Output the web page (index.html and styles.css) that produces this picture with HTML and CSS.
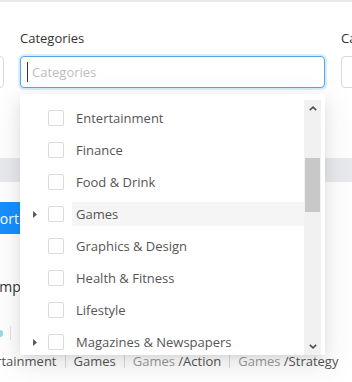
FILE: index.html
```html
<!DOCTYPE html>
<html lang="en">
<head>
<meta charset="utf-8">
<title>Categories</title>
<link rel="stylesheet" href="styles.css">
</head>
<body>
<div class="page">
  <div class="topbar"></div>
  <div class="filters">
    <div class="field field-side">
      <label class="label">Status</label>
      <div class="input"></div>
    </div>
    <div class="field field-main">
      <label class="label">Categories</label>
      <div class="input input-focus"><span class="caret"></span><span class="placeholder">Categories</span></div>
    </div>
    <div class="field field-side">
      <label class="label">Campaign</label>
      <div class="input"></div>
    </div>
  </div>
  <div class="band"></div>
  <div class="btn-row"><button class="btn">Export</button></div>
  <div class="name-row"><span class="name">Company</span></div>
  <div class="meta-row"><span class="dot"></span><span class="vline"></span></div>
  <div class="tags">
    <span class="tag">Entertainment</span>
    <span class="sep"></span>
    <span class="tag">Games</span>
    <span class="sep"></span>
    <span class="tag"><span class="parent">Games</span> /Action</span>
    <span class="sep"></span>
    <span class="tag"><span class="parent">Games</span> /Strategy</span>
  </div>

  <div class="dropdown">
    <ul class="tree">
      <li class="node"><span class="switcher"></span><span class="checkbox"></span><span class="title">Entertainment</span></li>
      <li class="node"><span class="switcher"></span><span class="checkbox"></span><span class="title">Finance</span></li>
      <li class="node"><span class="switcher"></span><span class="checkbox"></span><span class="title">Food &amp; Drink</span></li>
      <li class="node"><span class="switcher"><svg class="tri" width="4" height="7" viewBox="0 0 4 7"><path d="M0 0 L4 3.5 L0 7 Z"/></svg></span><span class="checkbox"></span><span class="title title-active">Games</span></li>
      <li class="node"><span class="switcher"></span><span class="checkbox"></span><span class="title">Graphics &amp; Design</span></li>
      <li class="node"><span class="switcher"></span><span class="checkbox"></span><span class="title">Health &amp; Fitness</span></li>
      <li class="node"><span class="switcher"></span><span class="checkbox"></span><span class="title">Lifestyle</span></li>
      <li class="node"><span class="switcher"><svg class="tri" width="4" height="7" viewBox="0 0 4 7"><path d="M0 0 L4 3.5 L0 7 Z"/></svg></span><span class="checkbox"></span><span class="title">Magazines &amp; Newspapers</span></li>
    </ul>
    <div class="scrollbar">
      <div class="sb-btn"><svg width="8" height="5" viewBox="0 0 8 5"><path d="M0.8 4.2 L4 1.2 L7.2 4.2" fill="none" stroke="#505050" stroke-width="1.6"/></svg></div>
      <div class="sb-track"><div class="sb-thumb"></div></div>
      <div class="sb-btn"><svg width="8" height="5" viewBox="0 0 8 5"><path d="M0.8 0.8 L4 3.8 L7.2 0.8" fill="none" stroke="#505050" stroke-width="1.6"/></svg></div>
    </div>
  </div>
</div>
</body>
</html>
```
FILE: styles.css
```css
* { box-sizing: border-box; }
html, body { margin: 0; padding: 0; background: #fff; }
body {
  font-family: "Open Sans", "Noto Sans", sans-serif;
  font-size: 13px;
  color: #555;
}
.page {
  position: relative;
  width: 352px;
  height: 382px;
  overflow: hidden;
}
.topbar { height: 2px; background: #e8e8e8; }

.filters {
  display: flex;
  gap: 16px;
  padding-top: 25px;
  margin-left: -196px;
}
.field { display: flex; flex-direction: column; flex-shrink: 0; }
.field-side { width: 200px; }
.field-main { width: 305px; }
.label {
  line-height: 22px;
  color: #333;
  margin-bottom: 7px;
}
.input {
  height: 32px;
  border: 1px solid #d9d9d9;
  border-radius: 4px;
  background: #fff;
  display: flex;
  align-items: center;
}
.input-focus {
  border-color: #5aa6e0;
  box-shadow: 0 0 0 2px rgba(24, 144, 255, 0.16);
  padding-left: 6px;
}
.caret { width: 1px; height: 20px; background: #333; margin-right: 4px; }
.placeholder { color: #bdbdbd; }

.band { margin-top: 70px; height: 24px; background: #e9eaed; }
.btn-row { margin-top: 20px; width: 34px; display: flex; justify-content: flex-end; }
.btn {
  flex-shrink: 0;
  height: 32px;
  padding: 0 15px;
  border: 0;
  border-radius: 4px;
  background: #1890ff;
  color: #fff;
  font: inherit;
  font-size: 14px;
}
.name-row { margin-top: 42px; line-height: 22px; margin-left: -18px; }
.name { color: #333; font-size: 14px; }
.meta-row { margin-top: 28px; height: 14px; display: flex; align-items: center; }
.dot { width: 3px; height: 7px; background: #4fc3d0; border-radius: 0 3px 3px 0; margin-right: 7px; opacity: .6; }
.vline { width: 1px; height: 14px; background: #e3e3e3; }

.tags {
  margin-top: 10px;
  margin-left: -31px;
  display: flex;
  align-items: center;
  line-height: 22px;
  white-space: nowrap;
  color: #555;
  font-size: 13px;
}
.sep { width: 1px; height: 13px; background: #dcdcdc; margin: 0 8px; flex-shrink: 0; }
.parent { color: #9a9a9a; }

.dropdown {
  position: absolute;
  left: 20px;
  top: 94px;
  width: 305px;
  height: 261px;
  background: #fff;
  display: flex;
  overflow: hidden;
  box-shadow: 0 3px 6px -4px rgba(0,0,0,.12), 0 6px 16px 0 rgba(0,0,0,.08), 0 9px 28px 8px rgba(0,0,0,.05);
  z-index: 2;
}
.tree {
  list-style: none;
  margin: 0;
  padding: 8px 0 0 4px;
  flex: 1;
}
.node {
  display: flex;
  align-items: center;
  height: 32px;
  padding: 4px 0;
}
.switcher {
  width: 24px;
  height: 24px;
  display: flex;
  align-items: center;
  justify-content: center;
  padding-right: 2px;
}
.tri { fill: #595959; }
.checkbox {
  width: 16px;
  height: 16px;
  border: 1px solid #d9d9d9;
  border-radius: 2px;
  margin-right: 8px;
  flex-shrink: 0;
}
.title {
  flex: 1;
  height: 24px;
  line-height: 24px;
  padding: 0 4px;
  white-space: nowrap;
  color: #555;
}
.title-active { background: #f5f5f5; }

.scrollbar {
  width: 17px;
  margin: 6px 4px 0 0;
  background: #f1f1f1;
  display: flex;
  flex-direction: column;
}
.sb-btn {
  height: 17px;
  display: flex;
  align-items: center;
  justify-content: center;
}
.sb-track { flex: 1; padding: 0 1px; }
.sb-thumb { margin-top: 41px; height: 54px; background: #c8c8c8; }
```
